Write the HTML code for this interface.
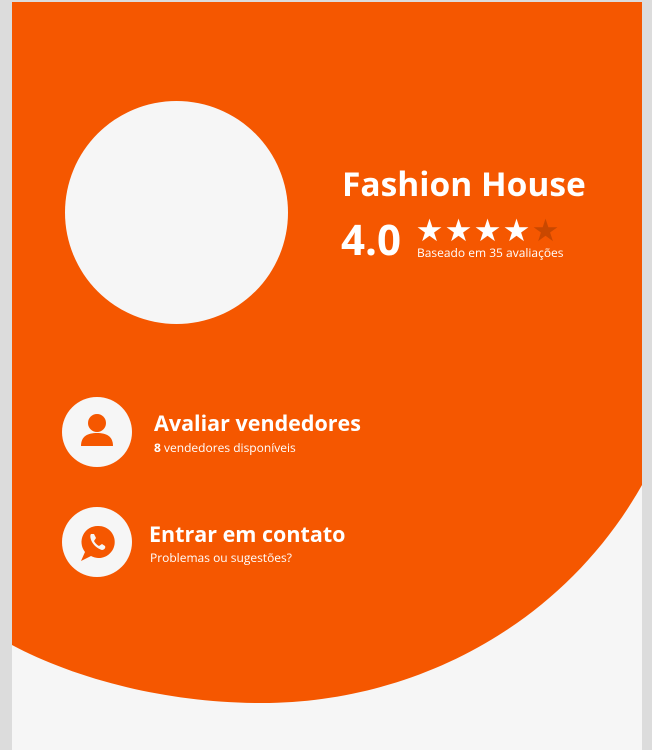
<!DOCTYPE html>
<html><head><meta charset="utf-8"><style>
html,body{margin:0;padding:0;}
body{width:652px;height:750px;background:#dcdcdc;position:relative;overflow:hidden;font-family:"Open Sans","Liberation Sans",sans-serif;}
.page{position:absolute;left:12px;top:2px;width:630px;height:748px;background:#f6f6f6;overflow:hidden;}
svg.bg{position:absolute;left:0;top:0;}
.avatar{position:absolute;left:53px;top:99px;width:223px;height:223px;border-radius:50%;background:#f6f6f6;}
.t{position:absolute;color:#fff;white-space:nowrap;}
.icon{position:absolute;width:70px;height:70px;border-radius:50%;background:#f6f6f6;}
.stars span{display:inline-block;width:29px;text-align:center;}
</style></head><body>
<div class="page">
<svg class="bg" width="630" height="748" viewBox="0 0 630 748">
<path d="M0,0 H630 V483 C550,625 400,701 250,701 C150,701 60,675 0,643 Z" fill="#f55700"/>
</svg>
<div class="avatar"></div>
<div class="t" style="left:330px;top:158px;font-size:33.5px;font-weight:bold;">Fashion House</div>
<div class="t" style="left:329px;top:213px;font-size:42px;font-weight:bold;line-height:50px;">4.0</div>
<div class="t stars" style="left:403px;top:211px;font-size:31px;line-height:34px;"><span>★</span><span>★</span><span>★</span><span>★</span><span style="color:#c94800">★</span></div>
<div class="t" style="left:405px;top:242px;font-size:12px;">Baseado em 35 avaliações</div>

<div class="icon" style="left:50px;top:395px;">
<svg width="70" height="70" viewBox="0 0 70 70"><circle cx="35" cy="26" r="9" fill="#f55700"/><path d="M19,49 C19,39 26,36 35,36 C44,36 51,39 51,49 Z" fill="#f55700"/></svg>
</div>
<div class="t" style="left:142px;top:407px;font-size:21.5px;font-weight:bold;">Avaliar vendedores</div>
<div class="t" style="left:142px;top:437px;font-size:12px;"><b>8</b> vendedores disponíveis</div>

<div class="icon" style="left:50px;top:505px;">
<svg width="70" height="70" viewBox="0 0 70 70"><path d="M36,19 A16,16 0 1 1 29,49 L19,54 L23,45 A16,16 0 0 1 36,19 Z" fill="#f55700"/><path d="M29,27 C28,28 28,31 30,35 C33,40 37,42 40,43 C42,43 44,41 43,39 L40,37 L37,39 C35,38 33,36 32,34 L34,31 L32,27 Z" fill="#f6f6f6"/></svg>
</div>
<div class="t" style="left:137px;top:518px;font-size:21.5px;font-weight:bold;">Entrar em contato</div>
<div class="t" style="left:138px;top:547px;font-size:12px;">Problemas ou sugestões?</div>
</div>
</body></html>
